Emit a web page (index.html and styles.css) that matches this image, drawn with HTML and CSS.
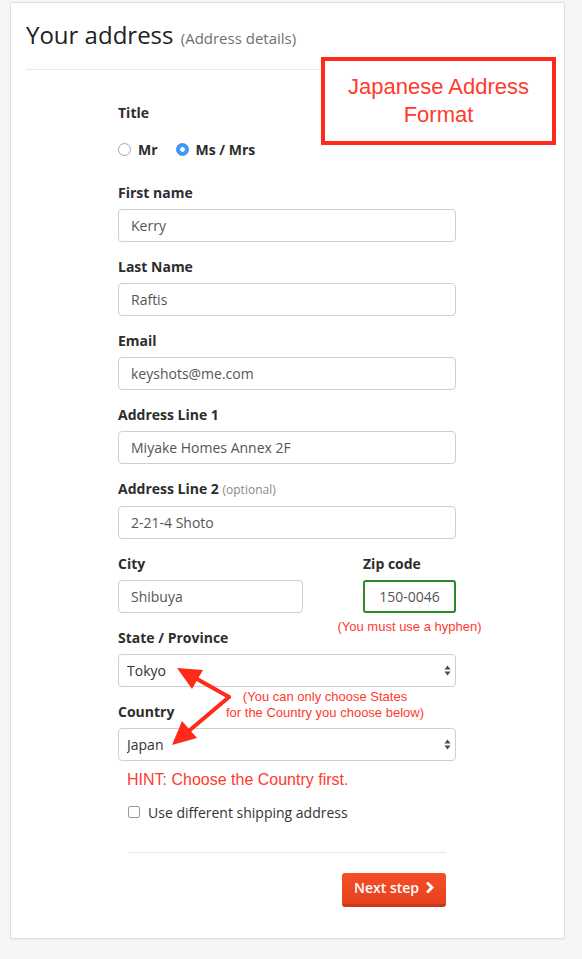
FILE: index.html
```html
<!DOCTYPE html>
<html lang="en">
<head>
<meta charset="utf-8">
<title>Your address</title>
<link rel="stylesheet" href="styles.css">
</head>
<body>
<div class="page">
  <div class="card">
    <div class="head">
      <h1 class="title">Your address <small class="sub">(Address details)</small></h1>
    </div>

    <form class="form">
      <div class="group group-title">
        <div class="label">Title</div>
        <div class="radios">
          <label class="radio"><input type="radio" name="title"> <span>Mr</span></label>
          <label class="radio"><input type="radio" name="title" checked> <span>Ms / Mrs</span></label>
        </div>
      </div>

      <div class="group">
        <label class="label">First name</label>
        <input class="input" type="text" value="Kerry">
      </div>
      <div class="group">
        <label class="label">Last Name</label>
        <input class="input" type="text" value="Raftis">
      </div>
      <div class="group">
        <label class="label">Email</label>
        <input class="input" type="text" value="keyshots@me.com">
      </div>
      <div class="group">
        <label class="label">Address Line 1</label>
        <input class="input" type="text" value="Miyake Homes Annex 2F">
      </div>
      <div class="group">
        <label class="label">Address Line 2 <span class="opt">(optional)</span></label>
        <input class="input" type="text" value="2-21-4 Shoto">
      </div>
      <div class="group row">
        <div class="col col-city">
          <label class="label">City</label>
          <input class="input" type="text" value="Shibuya">
        </div>
        <div class="col col-zip">
          <label class="label">Zip code</label>
          <input class="input input-zip" type="text" value="150-0046">
          <div class="zip-msg">(You must use a hyphen)</div>
        </div>
      </div>
      <div class="group">
        <label class="label">State / Province</label>
        <div class="select-wrap">
          <select class="select"><option>Tokyo</option></select>
          <svg class="sel-arrows" width="7" height="11" viewBox="0 0 7 11"><path d="M3.5 0.5 L6.5 4.5 L0.5 4.5 Z M3.5 10.5 L6.5 6.5 L0.5 6.5 Z" fill="#4a4a4a"/></svg>
        </div>
      </div>
      <div class="group group-country">
        <label class="label">Country</label>
        <div class="select-wrap">
          <select class="select"><option>Japan</option></select>
          <svg class="sel-arrows" width="7" height="11" viewBox="0 0 7 11"><path d="M3.5 0.5 L6.5 4.5 L0.5 4.5 Z M3.5 10.5 L6.5 6.5 L0.5 6.5 Z" fill="#4a4a4a"/></svg>
        </div>
      </div>

      <div class="hint">HINT: Choose the Country first.</div>

      <div class="actions">
        <label class="check"><input type="checkbox"> <span>Use different shipping address</span></label>
        <hr class="rule">
        <div class="btn-row">
          <button type="button" class="btn">Next step
            <svg class="chev" width="9" height="11" viewBox="0 0 9 11"><path d="M2 1.5 L6 5.5 L2 9.5" fill="none" stroke="#fff" stroke-width="2.8" stroke-linecap="square"/></svg>
          </button>
        </div>
      </div>
    </form>

    <div class="callout">Japanese Address<br>Format</div>

    <div class="note">(You can only choose States<br>for the Country you choose below)</div>

    <svg class="arrows" width="80" height="95" viewBox="0 0 80 95">
      <g stroke="#ff2a1a" stroke-width="4" stroke-linecap="round" fill="none">
        <line x1="69" y1="37" x2="37" y2="19"/>
        <line x1="69" y1="37" x2="30" y2="70"/>
      </g>
      <g fill="#ff2a1a">
        <polygon points="17,8 43,10 32,29"/>
        <polygon points="12,85 37,78 22,61"/>
      </g>
    </svg>
  </div>
</div>
</body>
</html>
```

FILE: styles.css
```css
html, body {
  margin: 0;
  padding: 0;
}
body {
  background: #f4f5f7;
  font-family: "Open Sans", "DejaVu Sans", sans-serif;
  color: #333;
}
.page {
  padding: 2px 0 20px 10px;
}
.card {
  position: relative;
  width: 555px;
  height: 937px;
  box-sizing: border-box;
  background: #fff;
  border: 1px solid #dcdee2;
  border-radius: 2px;
  box-shadow: 0 1px 1px rgba(0, 0, 0, 0.04);
}
.head {
  margin: 0 15px 0 15px;
  padding: 14px 0 0;
  height: 52px;
  border-bottom: 1px solid #e8e9eb;
}
.title {
  margin: 0;
  font-size: 24px;
  line-height: 36px;
  height: 36px;
  font-weight: 400;
  color: #222;
}
.sub {
  font-size: 15px;
  line-height: 1;
  color: #6f6f6f;
  margin-left: 1px;
}
.form {
  width: 338px;
  margin-left: 107px;
  padding-top: 33px;
}
.group {
  margin-bottom: 15px;
}
.group-title {
  margin-bottom: 24px;
}
.label {
  display: block;
  font-size: 14px;
  line-height: 20px;
  font-weight: 700;
  color: #2d2d2d;
  margin-bottom: 6px;
}
.opt {
  font-size: 12px;
  font-weight: 400;
  color: #8a8a8a;
}
.radios {
  display: flex;
  gap: 18px;
  margin-top: 16px;
  height: 20px;
  align-items: center;
}
.radio {
  display: flex;
  align-items: center;
  gap: 7px;
  font-size: 14px;
  font-weight: 700;
  color: #2d2d2d;
}
.radio input {
  appearance: none;
  -webkit-appearance: none;
  margin: 0;
  width: 13px;
  height: 13px;
  border: 1px solid #a9a9a9;
  border-radius: 50%;
  background: #fff;
  box-sizing: border-box;
}
.radio input:checked {
  border-color: #3a90f0;
  background: radial-gradient(circle, #fff 0 2px, #3d99fb 2.6px);
}
.input {
  display: block;
  width: 100%;
  height: 33px;
  box-sizing: border-box;
  margin: 0;
  padding: 0 12px;
  border: 1px solid #cfcfcf;
  border-radius: 4px;
  font-family: "Open Sans", "DejaVu Sans", sans-serif;
  font-size: 14px;
  color: #555;
  background: #fff;
  outline: none;
}
.row {
  display: flex;
  justify-content: space-between;
}
.col-city {
  width: 185px;
}
.col-zip {
  width: 93px;
  position: relative;
}
.input-zip {
  border: 2px solid #2a8a2a;
  border-radius: 3px;
  padding: 0;
  text-align: center;
}
.zip-msg {
  position: absolute;
  left: 50%;
  top: 100%;
  margin-top: 6px;
  transform: translateX(-50%);
  white-space: nowrap;
  font-family: "Liberation Sans", Arial, sans-serif;
  font-size: 13px;
  line-height: 16px;
  color: #ff3a2e;
}
.select-wrap {
  position: relative;
}
.select {
  display: block;
  width: 100%;
  height: 33px;
  margin: 0;
  box-sizing: border-box;
  padding: 0 8px;
  appearance: none;
  -webkit-appearance: none;
  border: 1px solid #cfcfcf;
  border-radius: 4px;
  background: #fff;
  font-family: "Open Sans", "DejaVu Sans", sans-serif;
  font-size: 14px;
  color: #333;
  outline: none;
}
.sel-arrows {
  position: absolute;
  right: 5px;
  top: 11px;
  pointer-events: none;
}
.group-country {
  margin-bottom: 0;
}
.hint {
  margin: 9px 0 0 9px;
  font-family: "Liberation Sans", Arial, sans-serif;
  font-size: 16px;
  line-height: 20px;
  color: #ff3a2e;
}
.actions {
  margin: 12px 10px 0;
}
.check {
  display: flex;
  align-items: center;
  gap: 8px;
  height: 20px;
  font-size: 14px;
  color: #333;
}
.check input {
  appearance: none;
  -webkit-appearance: none;
  margin: 0;
  width: 12px;
  height: 12px;
  box-sizing: border-box;
  border: 1px solid #9a9a9a;
  border-radius: 2px;
  background: #fff;
}
.rule {
  margin: 30px 0 0;
  border: 0;
  border-top: 1px solid #e7e8ea;
  height: 0;
}
.btn-row {
  display: flex;
  justify-content: flex-end;
  margin-top: 20px;
}
.btn {
  display: flex;
  align-items: center;
  gap: 7px;
  width: 104px;
  height: 34px;
  box-sizing: border-box;
  padding: 0 0 2px 12px;
  border: 0;
  border-bottom: 3px solid #c8391b;
  border-radius: 3px;
  background: linear-gradient(#f64e26, #e6421f);
  color: #fff;
  font-family: "Open Sans", "DejaVu Sans", sans-serif;
  font-size: 14px;
  font-weight: 600;
}
.chev {
  display: block;
}
.callout {
  position: absolute;
  left: 310px;
  top: 54px;
  width: 235px;
  height: 88px;
  box-sizing: border-box;
  border: 4px solid #ff2a1a;
  display: flex;
  align-items: center;
  justify-content: center;
  text-align: center;
  font-family: "Liberation Sans", Arial, sans-serif;
  font-size: 22px;
  line-height: 28px;
  color: #ff3a2e;
  background: #fff;
}
.note {
  position: absolute;
  left: 214px;
  top: 686px;
  width: 200px;
  text-align: center;
  font-family: "Liberation Sans", Arial, sans-serif;
  font-size: 13px;
  line-height: 16px;
  color: #ff3a2e;
  white-space: nowrap;
}
.arrows {
  position: absolute;
  left: 149px;
  top: 657px;
}
```
